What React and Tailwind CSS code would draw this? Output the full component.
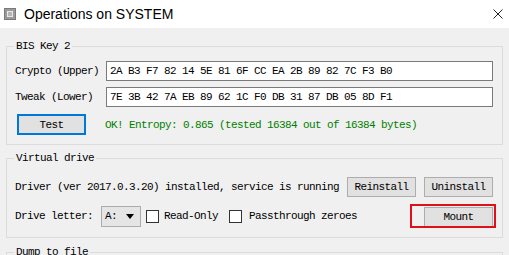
import React from "react"

const mono = "font-['Liberation_Mono','DejaVu_Sans_Mono',monospace] text-[11px] tracking-[-0.6px] leading-[14px] text-black"

function WinButton({ children, className = "" }) {
   return (
      <button className={`h-[20px] w-[69px] border border-[#adadad] bg-[#e1e1e1] flex items-center justify-center ${className}`}>
         {children}
      </button>
   )
}

function Checkbox() {
   return <span className="w-[13px] h-[13px] border border-[#333] bg-white shrink-0" />
}

export default function App() {
   return (
      <div className="w-[509px] h-[255px] overflow-hidden bg-[#f0f0f0] flex flex-col">
         {/* Title bar */}
         <div className="h-[28px] bg-white flex items-center shrink-0">
            <div className="ml-[4px] w-[12px] h-[12px] bg-[#9a9a9a] border border-[#7a7a7a] flex items-center justify-center">
               <div className="w-[6px] h-[6px] border border-[#e8e8e8] bg-[#b5b5b5]" />
            </div>
            <span className="ml-[8px] font-['Liberation_Sans',Arial,sans-serif] text-[14px] text-black leading-none">Operations on SYSTEM</span>
            <svg className="ml-auto mr-[6px]" width="10" height="10" viewBox="0 0 10 10">
               <path d="M0.5 0.5 L9.5 9.5 M9.5 0.5 L0.5 9.5" stroke="#222" strokeWidth="1" />
            </svg>
         </div>

         <div className={`px-[6px] ${mono}`}>
            {/* BIS Key 2 */}
            <fieldset className="mt-[11px] border border-[#dcdcdc] pl-[8px] pr-[9px] pt-[8px] pb-[9px]">
               <legend className="-ml-[1px] px-[2px]">BIS Key 2</legend>
               <div className="flex items-center h-[20px]">
                  <span className="w-[91px] shrink-0">Crypto (Upper)</span>
                  <div className="flex-1 h-[20px] border border-[#7a7a7a] bg-white flex items-center px-[3px]">2A B3 F7 82 14 5E 81 6F CC EA 2B 89 82 7C F3 B0</div>
               </div>
               <div className="flex items-center h-[20px] mt-[6px]">
                  <span className="w-[91px] shrink-0">Tweak (Lower)</span>
                  <div className="flex-1 h-[20px] border border-[#7a7a7a] bg-white flex items-center px-[3px]">7E 3B 42 7A EB 89 62 1C F0 DB 31 87 DB 05 8D F1</div>
               </div>
               <div className="flex items-center h-[21px] mt-[7px]">
                  <button className="ml-[2px] w-[69px] h-[21px] border-2 border-[#0078d7] bg-[#e1e1e1] flex items-center justify-center">Test</button>
                  <span className="ml-[19px] text-[#008000]">OK! Entropy: 0.865 (tested 16384 out of 16384 bytes)</span>
               </div>
            </fieldset>

            {/* Virtual drive */}
            <fieldset className="mt-[6px] border border-[#dcdcdc] pl-[8px] pr-[9px] pt-[12px] pb-[10px]">
               <legend className="-ml-[1px] px-[2px]">Virtual drive</legend>
               <div className="flex items-center h-[20px]">
                  <span>Driver (ver 2017.0.3.20) installed, service is running</span>
                  <WinButton className="ml-auto w-[68px]">Reinstall</WinButton>
                  <WinButton className="ml-[8px]">Uninstall</WinButton>
               </div>
               <div className="flex items-center h-[22px] mt-[8px]">
                  <span className="w-[86px] shrink-0">Drive letter:</span>
                  <div className="w-[40px] h-[21px] border border-[#acacac] bg-[#e5e5e5] flex items-center pl-[3px] pr-[6px]">
                     <span>A:</span>
                     <svg className="ml-auto" width="8" height="5" viewBox="0 0 8 5">
                        <path d="M0 0 H8 L4 5 Z" fill="#000" />
                     </svg>
                  </div>
                  <span className="ml-[5px] flex items-center">
                     <Checkbox />
                     <span className="ml-[5px]">Read-Only</span>
                  </span>
                  <span className="ml-[11px] flex items-center">
                     <Checkbox />
                     <span className="ml-[7px]">Passthrough zeroes</span>
                  </span>
                  <div className="ml-auto relative mt-[2px]">
                     <WinButton className="w-[69px]">Mount</WinButton>
                     <div className="absolute left-[-14px] top-[-3px] right-[-3px] bottom-[-1px] border-2 border-[#e0101a] pointer-events-none" />
                  </div>
               </div>
            </fieldset>

            {/* Dump to file */}
            <fieldset className="mt-[7px] border border-[#dcdcdc] pl-[8px] pr-[9px] pt-[8px] pb-[9px] h-[40px]">
               <legend className="-ml-[1px] px-[2px]">Dump to file</legend>
            </fieldset>
         </div>
      </div>
   )
}
